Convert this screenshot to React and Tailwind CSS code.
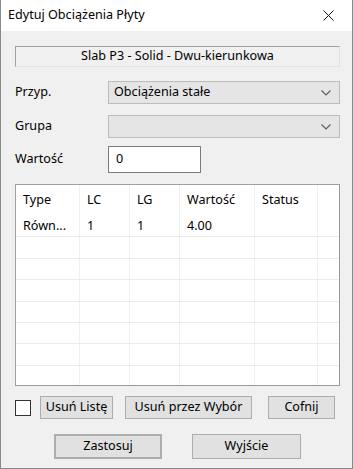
import { useState } from 'react'

const cols = [
    { key: 'type', label: 'Type', w: 'w-[64px]' },
    { key: 'lc', label: 'LC', w: 'w-[50px]' },
    { key: 'lg', label: 'LG', w: 'w-[50px]' },
    { key: 'val', label: 'Wartość', w: 'w-[75px]' },
    { key: 'status', label: 'Status', w: 'w-[63px]' },
]

const rows = [
    { type: 'Równ...', lc: '1', lg: '1', val: '4.00', status: '' },
    {}, {}, {}, {}, {}, {}, {},
]

function Chevron() {
    return (
        <svg width="10" height="6" viewBox="0 0 10 6" className="shrink-0">
            <path d="M0.5 0.5 L5 5 L9.5 0.5" fill="none" stroke="#5f5f5f" strokeWidth="1.2" />
        </svg>
    )
}

function Select({ value }) {
    return (
        <div className="flex-1 h-[23px] flex items-center justify-between pl-[5px] pr-[8px] bg-[#e5e5e5] border border-[#bcbcbc]">
            <span>{value}</span>
            <Chevron />
        </div>
    )
}

function Btn({ children, className = '' }) {
    return (
        <button className={`h-[23px] flex items-center justify-center bg-[#e1e1e1] border border-[#adadad] ${className}`}>
            {children}
        </button>
    )
}

export default function App() {
    const [checked, setChecked] = useState(false)

    return (
        <div className="w-[353px] h-[469px] flex flex-col bg-[#f0f0f0] text-[12.6px] text-black border-x border-b border-[#8a8a8a]" style={{ fontFamily: '"Noto Sans", "Segoe UI", sans-serif' }}>
            {/* Title bar */}
            <div className="h-[31px] shrink-0 bg-white flex items-center justify-between pl-[7px] pr-[18px]">
                <span>Edytuj Obciążenia Płyty</span>
                <svg width="11" height="11" viewBox="0 0 11 11">
                    <path d="M0.5 0.5 L10.5 10.5 M10.5 0.5 L0.5 10.5" stroke="#111" strokeWidth="1" />
                </svg>
            </div>

            <div className="flex-1 flex flex-col pl-[14px] pr-[12px] pt-[15px]">
                {/* Slab label */}
                <div className="h-[21px] flex items-center justify-center border border-t-[#a0a0a0] border-l-[#a0a0a0] border-b-[#e3e3e3] border-r-[#e3e3e3]">
                    Slab P3 - Solid - Dwu-kierunkowa
                </div>

                <div className="mt-[14px] flex items-center">
                    <span className="w-[93px] shrink-0">Przyp.</span>
                    <Select value="Obciążenia stałe" />
                </div>
                <div className="mt-[11px] flex items-center">
                    <span className="w-[93px] shrink-0">Grupa</span>
                    <Select value="" />
                </div>
                <div className="mt-[8px] flex items-center">
                    <span className="w-[93px] shrink-0">Wartość</span>
                    <div className="w-[93px] h-[27px] flex items-center px-[7px] bg-white border border-[#7a7a7a]">0</div>
                </div>

                {/* Table */}
                <div className="mt-[11px] h-[202px] bg-white border border-t-[#a0a0a0] border-l-[#a0a0a0] border-r-[#9a9a9a] border-b-[#9a9a9a] overflow-hidden">
                    <div className="flex h-[31px]">
                        {cols.map(c => (
                            <div key={c.key} className={`${c.w} shrink-0 flex items-center pl-[7px] border-r border-[#f0f0f0]`}>{c.label}</div>
                        ))}
                        <div className="flex-1" />
                    </div>
                    {rows.map((r, i) => (
                        <div key={i} className="flex h-[21.4px] border-b border-[#ececec]">
                            {cols.map(c => (
                                <div key={c.key} className={`${c.w} shrink-0 flex items-center pl-[7px] border-r border-[#f0f0f0] whitespace-nowrap overflow-hidden`}>{r[c.key] || ''}</div>
                            ))}
                            <div className="flex-1" />
                        </div>
                    ))}
                </div>

                {/* Action row */}
                <div className="mt-[10px] flex items-center">
                    <div
                        onClick={() => setChecked(!checked)}
                        className="w-[16px] h-[16px] shrink-0 bg-white border border-[#333]"
                    />
                    <Btn className="ml-[9px] w-[73px]">Usuń Listę</Btn>
                    <Btn className="ml-[12px] w-[127px]">Usuń przez Wybór</Btn>
                    <Btn className="ml-[16px] w-[67px]">Cofnij</Btn>
                </div>

                {/* Bottom row */}
                <div className="mt-[15px] flex items-center">
                    <Btn className="ml-[39px] w-[108px] h-[25px] border-2 border-[#0078d7]">Zastosuj</Btn>
                    <Btn className="ml-[30px] w-[109px] h-[25px]">Wyjście</Btn>
                </div>
            </div>
        </div>
    )
}
